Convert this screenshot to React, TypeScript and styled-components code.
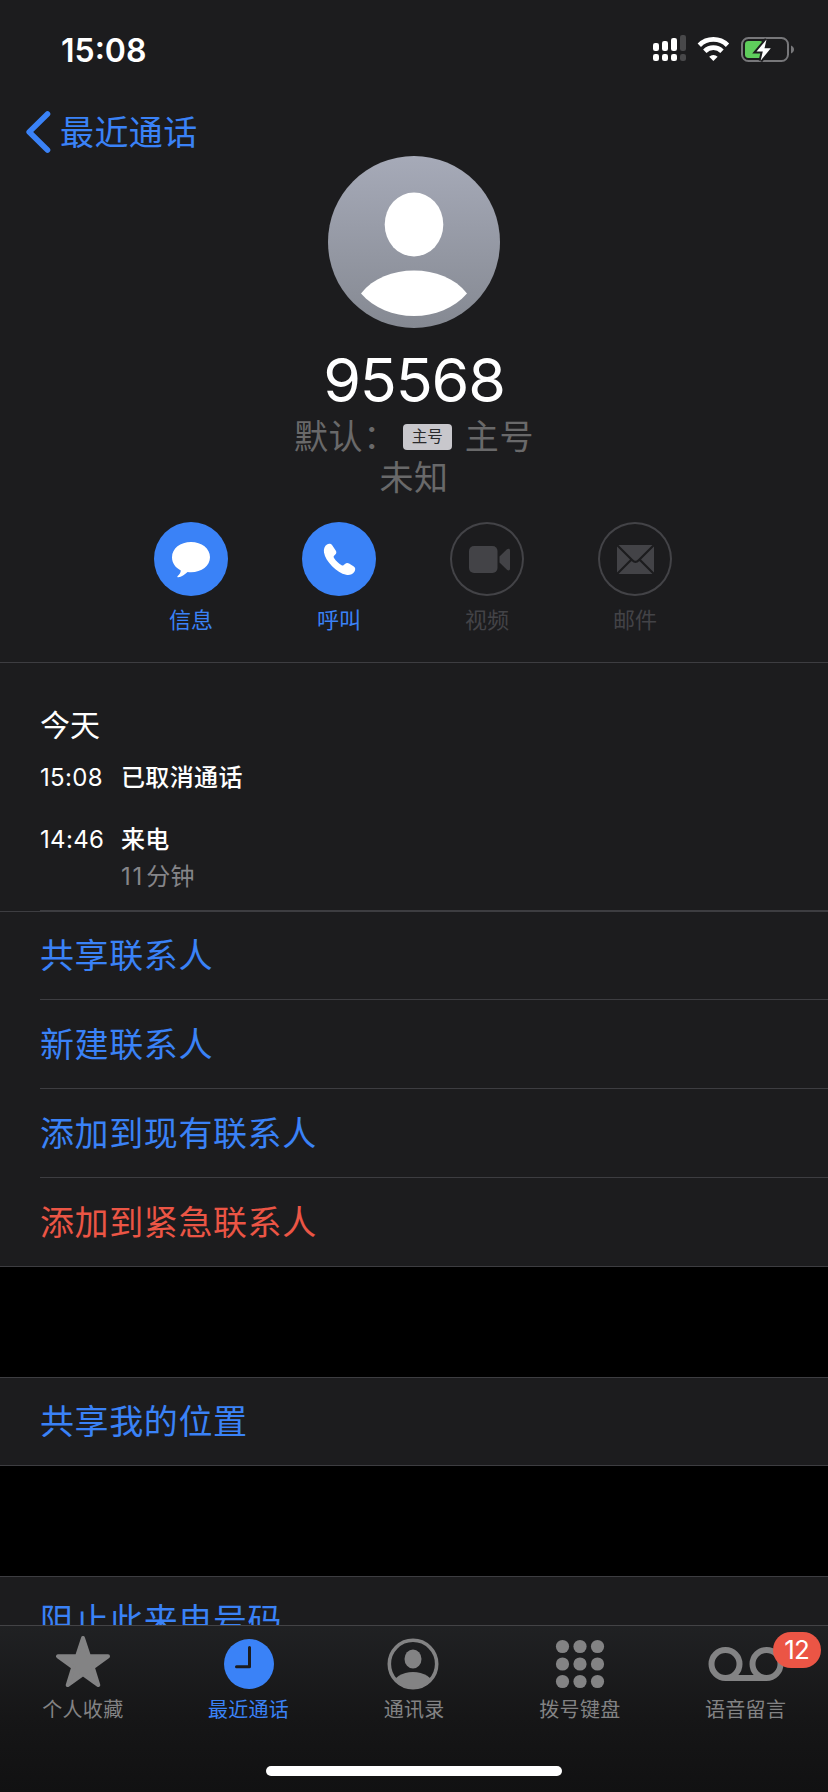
import React from "react";
import styled, { createGlobalStyle, css } from "styled-components";

const c = {
  panel: "#1c1c1e",
  blue: "#3a82f7",
  red: "#eb5545",
  line: "#3d3d41",
  dim: "#69696a",
  off: "#434347",
  tab: "#838384",
};

const Global = createGlobalStyle`
  *, *::before, *::after { box-sizing: border-box; }
  body {
    margin: 0;
    background: #000;
    color: #fff;
    font-family: Inter, "Noto Sans CJK SC", sans-serif;
    overflow: hidden;
  }
  svg { display: block; overflow: visible; }
`;

const Screen = styled.div`
  width: 828px;
  height: 1792px;
  display: flex;
  flex-direction: column;
  background: #000;
`;

const StatusBar = styled.header`
  height: 98px;
  flex: none;
  display: flex;
  justify-content: space-between;
  padding: 30px 34px 0 61px;
  background: ${c.panel};
  svg { margin-top: 4px; }
`;

const Clock = styled.time`
  font-size: 32px;
  font-weight: 600;
  line-height: 41px;
  letter-spacing: 0;
`;

const Scroll = styled.main`
  flex: 1;
  min-height: 0;
  overflow: hidden;
`;

const Profile = styled.section`
  height: 565px;
  background: ${c.panel};
  border-bottom: 1px solid ${c.line};
  display: flex;
  flex-direction: column;
  align-items: center;
`;

const Back = styled.a`
  align-self: stretch;
  height: 58px;
  padding-left: 26px;
  display: flex;
  align-items: flex-start;
  gap: 9px;
  color: ${c.blue};
  font-size: 34px;
  line-height: 70px;
  letter-spacing: 0.4px;
  svg { margin-top: 13px; }
`;

const Name = styled.h1`
  margin: 15px 0 -1px;
  font-size: 61px;
  font-weight: 400;
  line-height: 74px;
  letter-spacing: -1.2px;
`;

const Line = styled.div`
  height: 41px;
  line-height: 39px;
  display: flex;
  align-items: center;
  color: ${c.dim};
  font-size: 34px;
  letter-spacing: 0.6px;
`;

const SimBadge = styled.span`
  width: 49px;
  height: 26px;
  margin: 0 13px 0 5px;
  border-radius: 4px;
  background: #c8c7cc;
  color: #2a2a2c;
  font-size: 15.5px;
  letter-spacing: 0;
  line-height: 26px;
  text-align: center;
`;

const Actions = styled.div`
  display: flex;
  gap: 74px;
  margin: 24px 2px 0 0;
`;

const Action = styled.div<{ $off?: boolean }>`
  width: 74px;
  display: flex;
  flex-direction: column;
  align-items: center;
  color: ${(p) => (p.$off ? c.off : c.blue)};
  font-size: 22px;
  line-height: 32px;
  white-space: nowrap;
`;

const Disc = styled.div<{ $off?: boolean }>`
  width: 74px;
  height: 74px;
  border-radius: 50%;
  margin-bottom: 8px;
  ${(p) =>
    p.$off
      ? css`
          box-shadow: inset 0 0 0 2px ${c.off};
        `
      : css`
          background: ${c.blue};
        `}
`;

const History = styled.section`
  height: 248px;
  padding: 40px 0 0 40px;
  background: ${c.panel};
`;

const Day = styled.h2`
  margin: 0;
  font-size: 30px;
  font-weight: 400;
  line-height: 45px;
`;

const Calls = styled.div`
  height: 163px;
  padding-top: 13px;
  border-bottom: 1px solid ${c.line};
`;

const Call = styled.div<{ $gap?: number }>`
  display: grid;
  grid-template-columns: 81px 1fr;
  font-size: 24px;
  line-height: 34px;
  letter-spacing: 0.35px;
  margin-bottom: ${(p) => p.$gap ?? 0}px;
`;

const Kind = styled.span`
  font-weight: 500;
`;

const Duration = styled.span`
  grid-column: 2;
  margin-top: 3px;
  color: #858589;
`;

const Minutes = styled.span`
  letter-spacing: 1.8px;
  margin-right: 2px;
`;

const Group = styled.section`
  background: ${c.panel};
  border-top: 1px solid ${c.line};
  border-bottom: 1px solid ${c.line};
  padding-left: 40px;
  margin-bottom: 110px;
`;

const Row = styled.div<{ $danger?: boolean }>`
  height: 89px;
  line-height: 89px;
  border-bottom: 1px solid ${c.line};
  color: ${(p) => (p.$danger ? c.red : c.blue)};
  font-size: 34px;
  letter-spacing: 0.6px;
  &:first-child {
    height: 88px;
    line-height: 87px;
  }
  &:last-child {
    border-bottom: 0;
    height: 88px;
  }
  &:only-child {
    height: 87px;
    line-height: 87px;
  }
`;

const TabBar = styled.nav`
  height: 167px;
  flex: none;
  border-top: 1px solid #434346;
  background: linear-gradient(#202123, #161617 55%, #111112);
  display: flex;
  flex-direction: column;
  align-items: center;
`;

const Tabs = styled.div`
  height: 140px;
  align-self: stretch;
  display: grid;
  grid-template-columns: repeat(5, 165.7px);
`;

const Tab = styled.div<{ $on?: boolean }>`
  position: relative;
  display: flex;
  flex-direction: column;
  align-items: center;
  padding-top: 8px;
  color: ${(p) => (p.$on ? c.blue : c.tab)};
  font-size: 20px;
  line-height: 28px;
  letter-spacing: 0.3px;
  svg { margin-bottom: 6px; }
`;

const Count = styled.span`
  position: absolute;
  left: 110px;
  top: 6px;
  width: 48px;
  height: 36px;
  border-radius: 18px;
  background: ${c.red};
  color: #fff;
  font-size: 26px;
  line-height: 36px;
  letter-spacing: -0.6px;
  text-align: center;
`;

const HomeBar = styled.div`
  width: 296px;
  height: 10px;
  border-radius: 5px;
  background: #fff;
`;

const StatusIcons = () => (
  <svg width="142" height="30" viewBox="652 34 142 30">
    <g fill="#fff">
      <rect x="653" y="43" width="6" height="8" rx="2.2" />
      <rect x="662" y="41" width="6" height="10" rx="2.2" />
      <rect x="671" y="38" width="6" height="13" rx="2.2" />
      <rect x="653" y="54" width="6" height="7" rx="2.2" />
      <rect x="662" y="54" width="6" height="7" rx="2.2" />
      <rect x="671" y="54" width="6" height="7" rx="2.2" />
    </g>
    <g fill="#48484a">
      <rect x="680" y="35" width="6" height="16" rx="2.2" />
      <rect x="680" y="54" width="6" height="7" rx="2.2" />
    </g>
    <g fill="none" stroke="#fff" strokeWidth="4.8">
      <path d="M699.3 45.2a20.2 20.2 0 0 1 28.2 0" />
      <path d="M704.8 51.2a12.3 12.3 0 0 1 17.2 0" />
    </g>
    <path d="M713.4 61l-4.2-4.3a6.2 6.2 0 0 1 8.4 0z" fill="#fff" />
    <rect x="742" y="38" width="46" height="23" rx="6.5" fill="none" stroke="#77777a" strokeWidth="2" />
    <path d="M791 45.5c4 1.500 4 6.500 0 8z" fill="#77777a" />
    <rect x="745" y="41" width="18" height="17" rx="3.4" fill="#5fcd5c" />
    <path
      d="M766.500 39.500L756.500 51.500h6.300l-2.200 9.200 10.200-12.400h-6.300z"
      fill="#fff"
      stroke={c.panel}
      strokeWidth="4"
      paintOrder="stroke"
    />
  </svg>
);

const Chevron = () => (
  <svg width="25" height="42" viewBox="0 0 25 42">
    <path d="M21.5 3L3.2 21l18.3 18" fill="none" stroke="currentColor" strokeWidth="5.6" strokeLinecap="round" strokeLinejoin="round" />
  </svg>
);

const Avatar = () => (
  <svg width="172" height="172" viewBox="0 0 172 172">
    <defs>
      <linearGradient id="av" x1="0" y1="0" x2="0" y2="1">
        <stop offset="0" stopColor="#a6aab8" />
        <stop offset="1" stopColor="#858992" />
      </linearGradient>
    </defs>
    <circle cx="86" cy="86" r="86" fill="url(#av)" />
    <ellipse cx="86" cy="68.5" rx="29.3" ry="32" fill="#fff" />
    <path d="M33 137.5C45 122 65 114.5 86 114.5s41 7.500 53 23C126 152 107 160 86 160s-40-8-53-22.500z" fill="#fff" />
  </svg>
);

const Bubble = () => (
  <svg width="74" height="74" viewBox="0 0 74 74">
    <path d="M37 20c10.700 0 19 6.600 19 15.200S47.700 50.200 37 50.200c-1.200 0-2.300 0-3.400-.2-2.600 2.600-6.400 4.900-9.300 5.300-1 .1-1.300-.7-.6-1.300 1.800-1.700 3-3.600 3.100-5.600C21.500 45.800 18 41 18 35.200 18 26.600 26.300 20 37 20z" fill="#fff" />
  </svg>
);

const Phone = () => (
  <svg width="74" height="74" viewBox="0 0 74 74">
    <path d="M25 22.400c1.900-1 4-.7 5.200.9l3.500 5.100c1 1.500.8 2.900-.4 4.100l-1.200 1.200c-.6.700-.6 1.400-.1 2.200 2.100 3 4.500 5.300 7.600 7.400.8.500 1.500.4 2.100-.2l1.300-1.200c1.200-1.200 2.700-1.300 4.100-.4l4.700 3.100c1.700 1.200 1.900 3.300.6 5.100-2 2.600-4.700 3.800-8.300 3.100-4.800-.9-9.600-4.200-14-8.600-4.300-4.400-7.300-9.200-8.100-13.700-.6-3.700.7-6.600 3-8z" fill="#fff" />
  </svg>
);

const Video = () => (
  <svg width="74" height="74" viewBox="0 0 74 74" fill={c.off}>
    <rect x="19" y="24" width="28.500" height="27" rx="5" />
    <path d="M49.500 34.500l7.500-7.200c1.400-1.200 3-.8 3 1.200v18c0 2-1.600 2.400-3 1.200l-7.500-7.200z" />
  </svg>
);

const Mail = () => (
  <svg width="74" height="74" viewBox="0 0 74 74">
    <rect x="19" y="23" width="37" height="29" rx="1" fill={c.off} />
    <path d="M19 23l15.300 15.200c2.200 2.200 4.200 2.200 6.400 0L56 23M19 52l14-14M56 52L42 38" fill="none" stroke={c.panel} strokeWidth="2.200" />
  </svg>
);

const Star = () => (
  <svg width="56" height="56" viewBox="0 0 56 56" fill="currentColor" stroke="currentColor" strokeWidth="4" strokeLinejoin="round">
    <path d="M28 4l6 18.300h19L37.800 33.400 43.300 51 28 40.200 12.700 51l5.500-17.600L3 22.300h19z" />
  </svg>
);

const ClockFace = () => (
  <svg width="56" height="56" viewBox="0 0 56 56">
    <circle cx="28" cy="30" r="25" fill="currentColor" />
    <path d="M28.500 13.500v19.200H15.500" fill="none" stroke={c.panel} strokeWidth="3" strokeLinecap="round" strokeLinejoin="round" />
  </svg>
);

const Person = () => (
  <svg width="56" height="56" viewBox="1 0 56 56">
    <clipPath id="ring"><circle cx="28" cy="30" r="24" /></clipPath>
    <circle cx="28" cy="30" r="23.700" fill="none" stroke="currentColor" strokeWidth="3.600" />
    <ellipse cx="28" cy="25" rx="8.500" ry="9.500" fill="currentColor" />
    <ellipse cx="28" cy="51" rx="20" ry="13" fill="currentColor" clipPath="url(#ring)" />
  </svg>
);

const Keypad = () => (
  <svg width="56" height="56" viewBox="0 0 56 56" fill="currentColor">
    {[12.5, 30, 47.5].map((y) =>
      [10.5, 28, 45.5].map((x) => <circle key={`${x}-${y}`} cx={x} cy={y} r="6.600" />)
    )}
  </svg>
);

const Voicemail = () => (
  <svg width="76" height="56" viewBox="0 0 76 56" fill="none" stroke="currentColor" strokeWidth="6">
    <circle cx="17.500" cy="30" r="14" />
    <circle cx="58.500" cy="30" r="14" />
    <path d="M17.500 44h41" />
  </svg>
);

const actions = [
  { label: "信息", icon: <Bubble /> },
  { label: "呼叫", icon: <Phone /> },
  { label: "视频", icon: <Video />, off: true },
  { label: "邮件", icon: <Mail />, off: true },
];

const tabs = [
  { label: "个人收藏", icon: <Star /> },
  { label: "最近通话", icon: <ClockFace />, on: true },
  { label: "通讯录", icon: <Person /> },
  { label: "拨号键盘", icon: <Keypad /> },
  { label: "语音留言", icon: <Voicemail />, count: 12 },
];

export default function App() {
  return (
    <Screen>
      <Global />
      <StatusBar>
        <Clock>15:08</Clock>
        <StatusIcons />
      </StatusBar>
      <Scroll>
        <Profile>
          <Back><Chevron />最近通话</Back>
          <Avatar />
          <Name>95568</Name>
          <Line>默认：<SimBadge>主号</SimBadge>主号</Line>
          <Line>未知</Line>
          <Actions>
            {actions.map((a) => (
              <Action key={a.label} $off={a.off}>
                <Disc $off={a.off}>{a.icon}</Disc>
                {a.label}
              </Action>
            ))}
          </Actions>
        </Profile>
        <History>
          <Day>今天</Day>
          <Calls>
            <Call $gap={28}><span>15:08</span><Kind>已取消通话</Kind></Call>
            <Call>
              <span>14:46</span>
              <Kind>来电</Kind>
              <Duration><Minutes>11</Minutes>分钟</Duration>
            </Call>
          </Calls>
        </History>
        <Group>
          <Row>共享联系人</Row>
          <Row>新建联系人</Row>
          <Row>添加到现有联系人</Row>
          <Row $danger>添加到紧急联系人</Row>
        </Group>
        <Group><Row>共享我的位置</Row></Group>
        <Group><Row>阻止此来电号码</Row></Group>
      </Scroll>
      <TabBar>
        <Tabs>
          {tabs.map((t) => (
            <Tab key={t.label} $on={t.on}>
              {t.icon}
              {t.label}
              {t.count && <Count>{t.count}</Count>}
            </Tab>
          ))}
        </Tabs>
        <HomeBar />
      </TabBar>
    </Screen>
  );
}
